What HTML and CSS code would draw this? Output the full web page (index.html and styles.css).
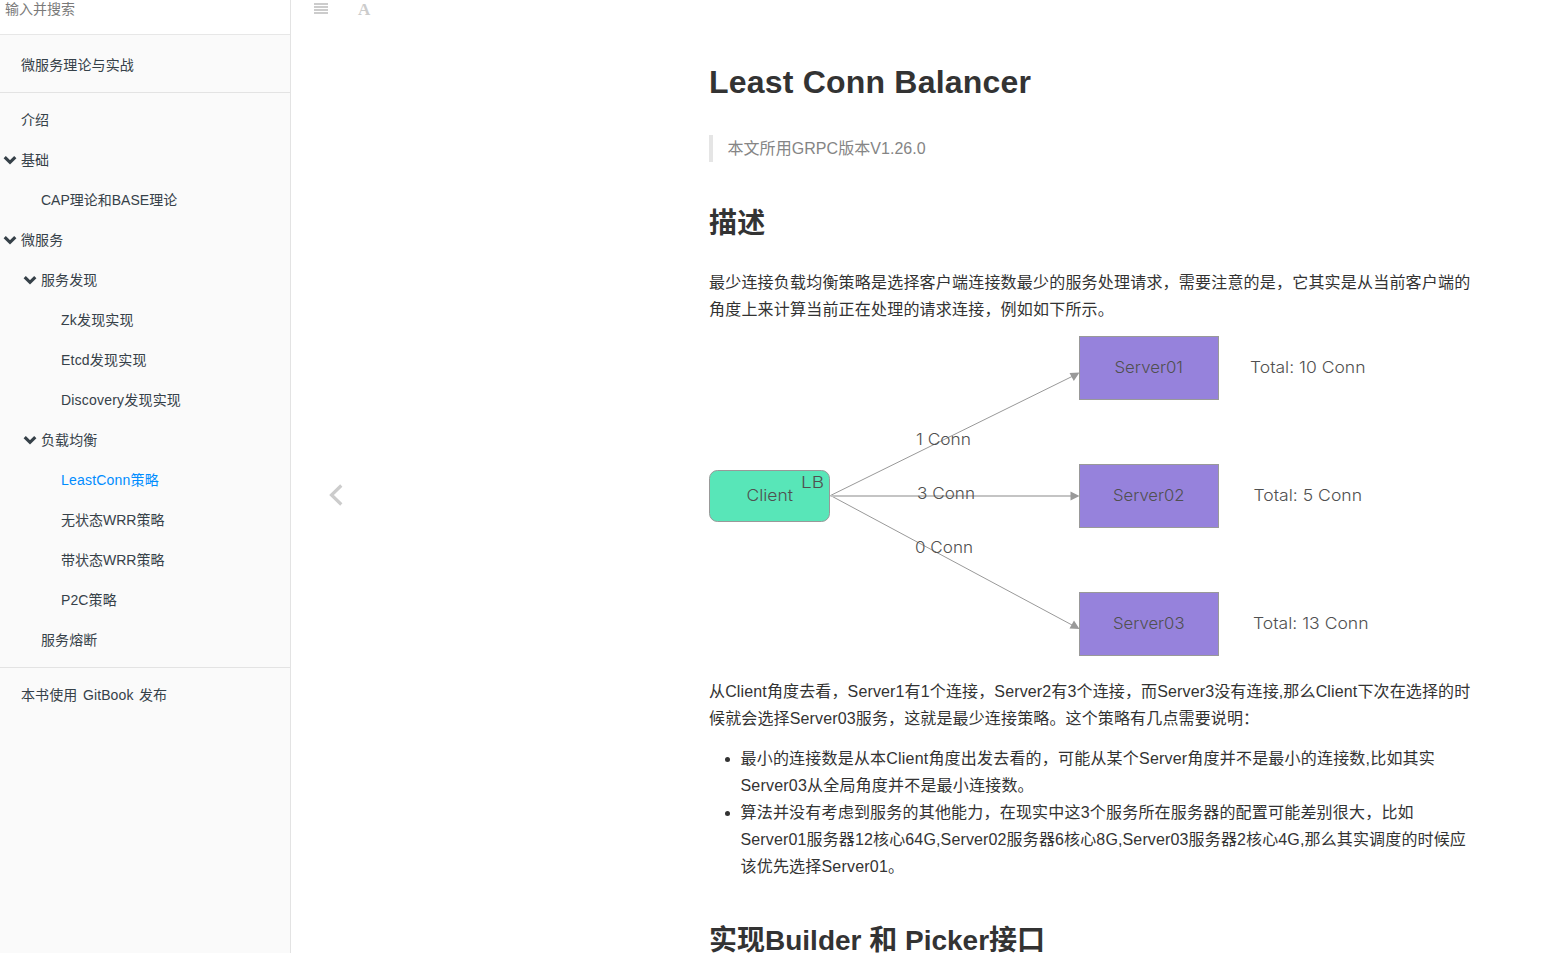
FILE: index.html
```html
<!DOCTYPE html>
<html lang="zh-CN">
<head>
<meta charset="utf-8">
<title>Least Conn Balancer</title>
<link rel="stylesheet" href="styles.css">
</head>
<body>
<div class="book">
  <aside class="sidebar">
    <div class="search"><input class="search-input" type="text" placeholder="输入并搜索"></div>
    <nav class="summary">
      <a class="item">微服务理论与实战</a>
      <div class="divider"></div>
      <a class="item">介绍</a>
      <a class="item"><svg class="chev" viewBox="0 0 14 10"><path d="M1.700 2.200 7 7.300 12.300 2.200"/></svg>基础</a>
      <a class="item level2 tight">CAP理论和BASE理论</a>
      <a class="item"><svg class="chev" viewBox="0 0 14 10"><path d="M1.700 2.200 7 7.300 12.300 2.200"/></svg>微服务</a>
      <a class="item level2"><svg class="chev" viewBox="0 0 14 10"><path d="M1.700 2.200 7 7.300 12.300 2.200"/></svg>服务发现</a>
      <a class="item level3 loose">Zk发现实现</a>
      <a class="item level3 loose">Etcd发现实现</a>
      <a class="item level3 loose">Discovery发现实现</a>
      <a class="item level2"><svg class="chev" viewBox="0 0 14 10"><path d="M1.700 2.200 7 7.300 12.300 2.200"/></svg>负载均衡</a>
      <a class="item level3 active loose">LeastConn策略</a>
      <a class="item level3 tight">无状态WRR策略</a>
      <a class="item level3 tight">带状态WRR策略</a>
      <a class="item level3">P2C策略</a>
      <a class="item level2">服务熔断</a>
      <div class="divider"></div>
      <a class="item published">本书使用 GitBook 发布</a>
    </nav>
  </aside>
  <div class="rail">
    <div class="toolbar">
      <svg class="tool" width="14" height="12" viewBox="0 0 14 12"><path d="M0 0h14v2H0zM0 3h14v2H0zM0 6h14v2H0zM0 9h14v2H0z"/></svg>
      <span class="font-tool">A</span>
    </div>
    <svg class="prev" width="16" height="24" viewBox="0 0 16 24"><path d="M13.300 2.500 3.500 12 13.300 21.500"/></svg>
  </div>
  <main class="content">
    <h1>Least Conn Balancer</h1>
    <blockquote>本文所用GRPC版本V1.26.0</blockquote>
    <h2>描述</h2>
    <p>最少连接负载均衡策略是选择客户端连接数最少的服务处理请求，需要注意的是，它其实是从当前客户端的<br>角度上来计算当前正在处理的请求连接，例如如下所示。</p>
    <svg class="diagram" width="768" height="322" viewBox="709 336 768 322">
      <g class="wire">
        <path d="M830.5 495.5 1072 376.5M830.5 495.5 1072 625"/>
        <path class="straight" d="M830.5 496H1072"/>
      </g>
      <g class="head">
        <path d="M1079.5 372.5 1069.5 373 1073.8 381zM1079.5 496 1070.5 491.5V500.500zM1079.5 629 1069.5 628.500 1074 620.500z"/>
      </g>
      <rect class="client" x="709.5" y="470.5" width="120" height="51" rx="8"/>
      <rect class="server" x="1079.500" y="336.500" width="139" height="63"/>
      <rect class="server" x="1079.500" y="464.500" width="139" height="63"/>
      <rect class="server" x="1079.500" y="592.500" width="139" height="63"/>
      <g class="label">
        <text x="746.500" y="501" textLength="46.500" lengthAdjust="spacingAndGlyphs">Client</text>
        <text x="801" y="488" textLength="23" lengthAdjust="spacingAndGlyphs">LB</text>
        <text x="1114.500" y="373" textLength="68.500" lengthAdjust="spacingAndGlyphs">Server01</text>
        <text x="1113" y="501" textLength="71.500" lengthAdjust="spacingAndGlyphs">Server02</text>
        <text x="1113" y="629" textLength="71.500" lengthAdjust="spacingAndGlyphs">Server03</text>
        <text x="1250" y="373" textLength="115.500" lengthAdjust="spacingAndGlyphs">Total: 10 Conn</text>
        <text x="1253.500" y="501" textLength="108.500" lengthAdjust="spacingAndGlyphs">Total: 5 Conn</text>
        <text x="1253" y="629" textLength="115.500" lengthAdjust="spacingAndGlyphs">Total: 13 Conn</text>
        <text x="916" y="445" textLength="55" lengthAdjust="spacingAndGlyphs">1 Conn</text>
        <text x="917" y="499" textLength="58" lengthAdjust="spacingAndGlyphs">3 Conn</text>
        <text x="915" y="553" textLength="58" lengthAdjust="spacingAndGlyphs">0 Conn</text>
      </g>
    </svg>
    <p class="mixed">从Client角度去看，Server1有1个连接，Server2有3个连接，而Server3没有连接,那么Client下次在选择的时<br>候就会选择Server03服务，这就是最少连接策略。这个策略有几点需要说明：</p>
    <ul>
      <li>最小的连接数是从本Client角度出发去看的，可能从某个Server角度并不是最小的连接数,比如其实<br>Server03从全局角度并不是最小连接数。</li>
      <li>算法并没有考虑到服务的其他能力，在现实中这3个服务所在服务器的配置可能差别很大，比如<br><span class="mixed">Server01服务器12核心64G,Server02服务器6核心8G,Server03服务器2核心4G,那么其实调度的时候应</span><br>该优先选择Server01。</li>
    </ul>
    <h2 class="next">实现Builder 和 Picker接口</h2>
  </main>
</div>
</body>
</html>
```
FILE: styles.css
```css
* { box-sizing: border-box; }
body {
  margin: 0;
  background: #fff;
  color: #333;
  font-family: "Liberation Sans", "Noto Sans CJK SC", sans-serif;
}
.book { display: flex; height: 953px; }

.sidebar {
  flex: none;
  width: 291px;
  background: #fafafa;
  border-right: 1px solid #e3e3e3;
}
.search { height: 35px; background: #fff; border-bottom: 1px solid #e7e7e7; }
.search-input {
  display: block;
  width: 100%;
  height: 18px;
  padding: 0 5px;
  border: 0;
  background: transparent;
  font: 14px/18px "Liberation Sans", "Noto Sans CJK SC", sans-serif;
}
.search-input::placeholder { color: #7a7a7a; }
.summary { padding-top: 10px; }
.item {
  display: block;
  height: 40px;
  padding-left: 21px;
  color: #364149;
  font-size: 14px;
  line-height: 40px;
  letter-spacing: 0.12px;
  white-space: nowrap;
}
.level2 { padding-left: 41px; }
.level3 { padding-left: 61px; }
.tight { letter-spacing: 0; }
.loose { letter-spacing: 0.2px; }
.published { word-spacing: 1.4px; }
.active { color: #008cff; }
.chev {
  width: 14px;
  height: 10px;
  margin: 0 4px 0 -18px;
  fill: none;
  stroke: #364149;
  stroke-width: 3.2;
}
.divider { height: 1px; margin: 7px 0; background: #e3e3e3; }

.rail { flex: none; width: 418px; }
.toolbar { display: flex; gap: 30px; height: 20px; padding-left: 23px; }
.tool { margin-top: 3px; fill: #ccc; }
.font-tool {
  color: #ccc;
  font: bold 17px/20px "Liberation Serif", serif;
}
.prev {
  display: block;
  margin: 463px 0 0 37px;
  fill: none;
  stroke: #ccc;
  stroke-width: 3.2;
}

.content {
  flex: none;
  width: 800px;
  height: 953px;
  padding-top: 60px;
  font-size: 16px;
  line-height: 27px;
  letter-spacing: 0.2px;
  white-space: nowrap;
}
h1 { margin: 0 0 31px; font-size: 32px; line-height: 44px; }
h2 { margin: 0 0 25px; font-size: 28px; line-height: 40px; }
.next { height: 32px; margin: 0; letter-spacing: 0; }
blockquote {
  margin: 0 0 42px;
  padding-left: 14.5px;
  border-left: 4px solid #e5e5e5;
  color: #858585;
  letter-spacing: 0.05px;
}
p { margin: 0; }
.mixed { letter-spacing: 0.14px; }
.diagram { display: block; margin: 13px 0 20px; }
ul { margin: 13px 0 41px; padding-left: 31.5px; }

.wire { fill: none; stroke: #999; stroke-width: 1; }
.straight { stroke: #c4c4c4; stroke-width: 2; }
.head { fill: #999; }
.client { fill: #58e6b8; stroke: #999; }
.server { fill: #9682dc; stroke: #999; }
.label {
  fill: #505050;
  font-family: Inter, sans-serif;
  font-size: 16.5px;
  font-weight: 350;
  letter-spacing: 0;
}
```
